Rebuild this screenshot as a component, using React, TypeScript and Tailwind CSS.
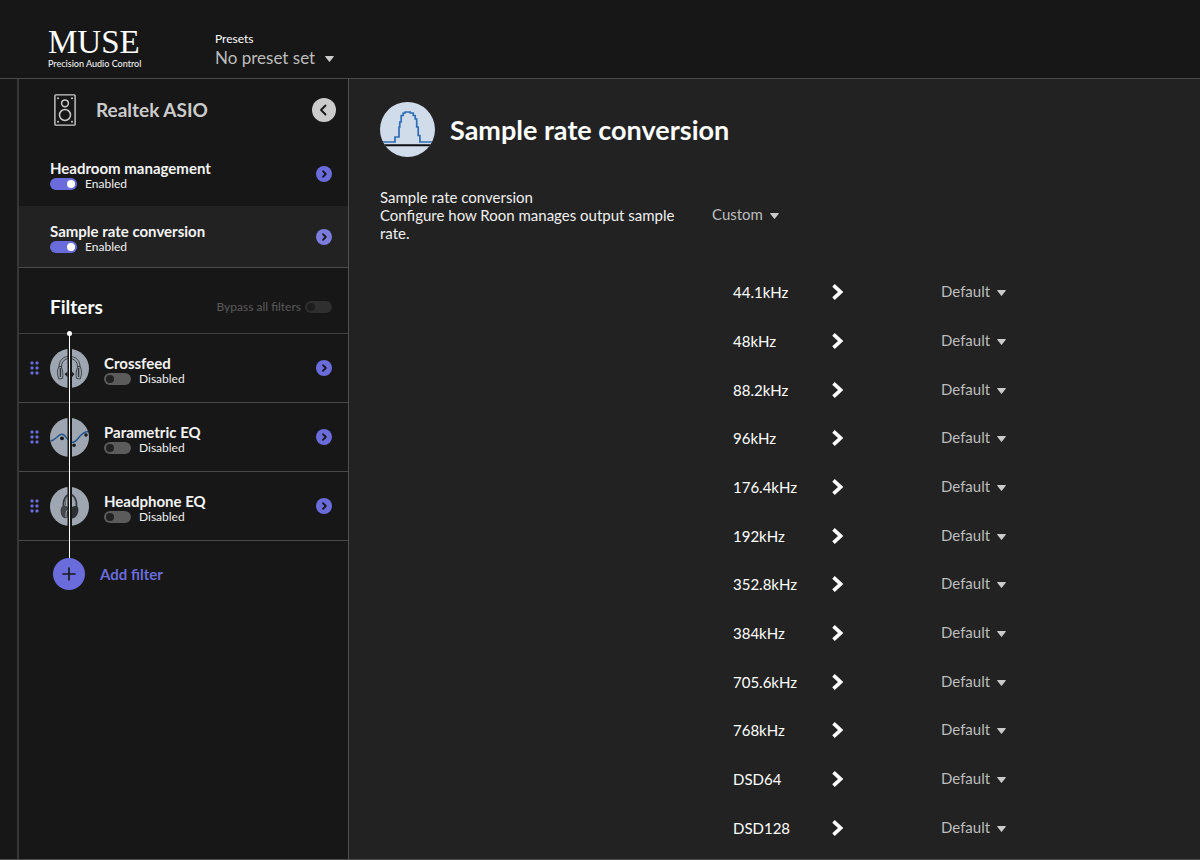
import { useState, type ReactNode } from "react";

const rates = [
  "44.1kHz",
  "48kHz",
  "88.2kHz",
  "96kHz",
  "176.4kHz",
  "192kHz",
  "352.8kHz",
  "384kHz",
  "705.6kHz",
  "768kHz",
  "DSD64",
  "DSD128",
];

function Caret({ className }: { className: string }) {
  return (
    <svg viewBox="0 0 9 6" className={className} aria-hidden="true">
      <path d="M0.6 0h7.8q0.8 0 0.3 0.7L5 5.6q-0.5 0.6-1 0L0.3 0.7Q-0.2 0 0.6 0Z" fill="#cbcbcb" />
    </svg>
  );
}

function SmallSelect({ id, label, options }: { id: string; label?: string; options: string[] }) {
  return (
    <span className="relative inline-flex items-center">
      <select
        id={id}
        aria-label={label}
        className="field-sizing-content cursor-pointer appearance-none bg-transparent pb-[2px] pr-4 text-[15px] leading-5 text-[#bdbdbd] outline-none"
      >
        {options.map((o) => (
          <option key={o} className="bg-[#222222]">
            {o}
          </option>
        ))}
      </select>
      <Caret className="pointer-events-none absolute right-0 top-[9px] h-[6px] w-[9px]" />
    </span>
  );
}

function Toggle({ id, initial, muted = false }: { id: string; initial: boolean; muted?: boolean }) {
  const [on, setOn] = useState(initial);
  const track = on ? "bg-[#6a6cdb]" : muted ? "bg-[#2f2f30]" : "bg-[#5b5b5b]";
  const knob = on
    ? "before:translate-x-[15px] before:bg-white"
    : muted
      ? "before:bg-[#1d1d1d]"
      : "before:bg-[#212121]";
  return (
    <input
      id={id}
      type="checkbox"
      role="switch"
      checked={on}
      onChange={(e) => setOn(e.target.checked)}
      className={`flex h-3 w-[27px] shrink-0 cursor-pointer appearance-none items-center rounded-full px-[2px] before:size-2 before:rounded-full before:content-[''] ${track} ${knob}`}
    />
  );
}

function OpenButton({ label, light = false }: { label: string; light?: boolean }) {
  return (
    <button
      type="button"
      aria-label={label}
      className={`flex size-4 shrink-0 items-center justify-center rounded-full ${light ? "bg-[#7b7cdc]" : "bg-[#6a6cdb]"}`}
    >
      <svg viewBox="0 0 16 16" className="size-4" fill="none" stroke="#171717" strokeWidth="1.8" strokeLinecap="round" strokeLinejoin="round" aria-hidden="true">
        <path d="M7 5.2 9.8 8 7 10.8" />
      </svg>
    </button>
  );
}

function Stage({ id, name, enabled }: { id: string; name: string; enabled: boolean }) {
  return (
    <div className="min-w-0 flex-1 pt-[2px]">
      <h3 className="text-[15px] font-bold leading-[18px] text-[#f4f4f4]">{name}</h3>
      <label htmlFor={id} className="flex items-center gap-2 text-xs leading-[14px] text-[#f0f0f0]">
        <Toggle id={id} initial={enabled} />
        {enabled ? "Enabled" : "Disabled"}
      </label>
    </div>
  );
}

function FilterIcon({ children }: { children: ReactNode }) {
  return (
    <svg viewBox="0 0 39 39" className="size-[39px] shrink-0" aria-hidden="true">
      <circle cx="19.5" cy="19.5" r="19.5" fill="#9ea7b1" />
      {children}
      <path d="M17.500 0h4.500v39h-4.500z" fill="#171717" />
    </svg>
  );
}

function CrossfeedIcon() {
  return (
    <FilterIcon>
      <g fill="none" stroke="#33383d" strokeWidth="0.9">
        <path d="M9 18.5C8 3.5 31 3.5 30 18.5" />
        <path d="M11.5 18C11 6.5 28 6.5 27.5 18" />
        <path d="M9 17.5c-2 3-2 8-.2 12.5l3.8-.6c.6-4 .2-8-1.4-12Z" />
        <path d="M30 17.5c2 3 2 8 .2 12.5l-3.8-.6c-.6-4-.2-8 1.4-12Z" />
        <path d="M10.4 19v9M28.6 19v9" strokeWidth="1.4" />
      </g>
      <path d="M14.5 25l3-2.200v5.400zM24.5 25L22 22.8v5.4z" fill="#1f2225" />
    </FilterIcon>
  );
}

function ParametricIcon() {
  return (
    <FilterIcon>
      <path d="M.6 23C6 22 8 16 12 16.300c4 .3 5.500 7.500 10 8C28 25 29 14 38.200 13.500" fill="none" stroke="#23568f" strokeWidth="1.400" />
      <circle cx="12" cy="20.300" r="1.900" fill="#171a1d" />
      <circle cx="24" cy="27.300" r="1.800" fill="#171a1d" />
      <circle cx="36" cy="17" r="1.700" fill="#171a1d" />
    </FilterIcon>
  );
}

function HeadphoneIcon() {
  return (
    <FilterIcon>
      <path d="M13.500 20C12 4 27.500 3 26.500 20" fill="none" stroke="#33363b" strokeWidth="1.700" />
      <path d="M15.500 18C15 7 21 6 22 8" fill="none" stroke="#5a6067" strokeWidth="1" />
      <path d="M12.500 19c3-1.500 6 0 6.500 5.500s-2 7.500-5 6.500c-4-1.500-4.500-10-1.500-12Z" fill="#43464b" />
      <path d="M22 20c2.500-1.500 5-1.500 6 .5 1.300 4-.5 8.500-4 10.500-1.500 1-3 .5-4 0Z" fill="#2d3034" />
      <path d="M16 30v-4q.3-3 2.500-3" fill="none" stroke="#9ea7b1" strokeWidth="1" />
    </FilterIcon>
  );
}

function DragHandle({ label }: { label: string }) {
  return (
    <button type="button" aria-label={label} className="flex w-[9px] shrink-0 cursor-grab justify-center">
      <svg viewBox="0 0 9 14" className="h-[14px] w-[9px]" fill="#6a6cdb" aria-hidden="true">
        <rect x="0.500" y="0.500" width="3" height="3" rx="1" />
        <rect x="5.500" y="0.500" width="3" height="3" rx="1" />
        <rect x="0.500" y="5.500" width="3" height="3" rx="1" />
        <rect x="5.500" y="5.500" width="3" height="3" rx="1" />
        <rect x="0.500" y="10.500" width="3" height="3" rx="1" />
        <rect x="5.500" y="10.500" width="3" height="3" rx="1" />
      </svg>
    </button>
  );
}

function SpeakerIcon() {
  return (
    <svg viewBox="0 0 22 32" className="h-8 w-[22px] shrink-0" fill="none" stroke="#cbcbcb" aria-hidden="true">
      <rect x="0.900" y="0.900" width="20.200" height="30.200" rx="0.800" strokeWidth="1.400" />
      <circle cx="11" cy="9.300" r="3.400" strokeWidth="1.500" />
      <circle cx="11" cy="21" r="5.500" strokeWidth="1.500" />
      <g fill="#cbcbcb" stroke="none">
        <circle cx="4" cy="4.200" r="1" />
        <circle cx="18" cy="4.200" r="1" />
        <circle cx="4" cy="27.800" r="1" />
        <circle cx="18" cy="27.800" r="1" />
      </g>
    </svg>
  );
}

function Sidebar() {
  const filters = [
    { id: "crossfeed", name: "Crossfeed", icon: <CrossfeedIcon /> },
    { id: "parametric", name: "Parametric EQ", icon: <ParametricIcon /> },
    { id: "headphone", name: "Headphone EQ", icon: <HeadphoneIcon /> },
  ];
  return (
    <aside className="ml-[17px] w-[332px] shrink-0 border-l-2 border-r border-l-[#373737] border-r-[#505050]">
      <div className="flex h-[63px] items-center pb-[2px] pl-[35px] pr-3">
        <SpeakerIcon />
        <h2 className="flex-1 pl-5 text-[19px] font-bold leading-6 text-[#cbcbcb]">Realtek ASIO</h2>
        <button type="button" aria-label="Collapse" className="flex size-6 items-center justify-center rounded-full bg-[#cbcbcb]">
          <svg viewBox="0 0 24 24" className="size-6" fill="none" stroke="#171717" strokeWidth="1.800" strokeLinecap="round" strokeLinejoin="round" aria-hidden="true">
            <path d="M13.500 7.500 9 12l4.500 4.500" />
          </svg>
        </button>
      </div>
      <div className="flex h-16 items-center pl-[31px] pr-4">
        <Stage id="headroom" name="Headroom management" enabled />
        <OpenButton label="Open Headroom management" />
      </div>
      <div className="flex h-[62px] items-center border-b border-[#4a4a4a] bg-[#222222] pl-[31px] pr-4">
        <Stage id="src" name="Sample rate conversion" enabled />
        <OpenButton label="Open Sample rate conversion" light />
      </div>
      <div className="flex h-[66px] items-center border-b border-[#404040] pl-[31px] pr-4 pt-[13px]">
        <h2 className="flex-1 text-[19px] font-bold leading-6 text-white">Filters</h2>
        <label htmlFor="bypass" className="flex items-center gap-1 text-xs text-[#5a5a5a]">
          Bypass all filters
          <Toggle id="bypass" initial={false} muted />
        </label>
      </div>
      <div className="relative">
        <ul>
          {filters.map((f) => (
            <li key={f.id} className="flex h-[69px] items-center border-b border-[#484848] pl-[11px] pr-4">
              <DragHandle label={`Move ${f.name}`} />
              <span className="ml-[11px] mr-[15px] flex">{f.icon}</span>
              <div className="flex flex-1 pt-[2px]">
                <Stage id={f.id} name={f.name} enabled={false} />
              </div>
              <OpenButton label={`Open ${f.name}`} />
            </li>
          ))}
        </ul>
        <div className="absolute -bottom-5 left-[50px] top-0 w-px bg-white" />
        <div className="absolute left-12 -top-[3px] size-[5px] rounded-full bg-white" />
      </div>
      <button type="button" className="relative ml-[34px] mt-[17px] flex items-center gap-[15px] text-[15px] font-bold text-[#6a6cdb]">
        <span className="flex size-8 items-center justify-center rounded-full bg-[#6a6cdb]">
          <svg viewBox="0 0 14 14" className="size-[14px]" fill="none" stroke="#171717" strokeWidth="1.600" strokeLinecap="round" aria-hidden="true">
            <path d="M7 1v12M1 7h12" />
          </svg>
        </span>
        Add filter
      </button>
    </aside>
  );
}

export default function App() {
  return (
    <div className="flex min-h-screen flex-col border-b border-[#505050] bg-[#171717] font-['Lato',sans-serif] text-white">
      <header className="flex h-[79px] shrink-0 border-b border-[#4a4a4a] pl-12">
        <div className="w-[167px] pt-7">
          <div className="font-['Liberation_Serif',serif] text-[33px] leading-[29px]">MUSE</div>
          <div className="text-[9px] font-medium leading-[13px] text-[#f0f0f0]">Precision Audio Control</div>
        </div>
        <div className="pt-8">
          <label htmlFor="preset" className="block text-[12px] leading-[14px]">
            Presets
          </label>
          <span className="relative inline-flex">
            <select id="preset" className="field-sizing-content cursor-pointer appearance-none bg-transparent pr-[19px] text-[17px] leading-5 text-[#bdbdbd] outline-none">
              <option className="bg-[#222222]">No preset set</option>
            </select>
            <Caret className="pointer-events-none absolute right-0 top-2 h-[6px] w-[9px]" />
          </span>
        </div>
      </header>
      <div className="flex flex-1">
        <Sidebar />
        <main className="flex min-w-0 flex-1 flex-col bg-[#222222] pb-[7px] pl-[31px]">
          <div className="flex items-center gap-[15px] pt-[23px]">
            <svg viewBox="0 0 55 55" className="size-[55px]" aria-hidden="true">
              <defs>
                <clipPath id="disc">
                  <circle cx="27.500" cy="27.500" r="27.500" />
                </clipPath>
              </defs>
              <g clipPath="url(#disc)">
                <path d="M0 0h55v55H0z" fill="#d0dcea" />
                <path d="M0 40h15v-5h4V25h.8v-5h1.400v-6.500h2v-2.500h2V10h5v1h3v2.500h2V17h1.500v8h1.500v8.500h1.700V40H55" fill="none" stroke="#2f6db5" strokeWidth="1.700" />
                <path d="M0 42.300h55v1.900H0z" fill="#0d0f12" />
              </g>
            </svg>
            <h1 className="text-[27px] font-bold leading-8">Sample rate conversion</h1>
          </div>
          <div className="flex items-center gap-8 pt-[31px]">
            <p className="w-[300px] text-[15px] leading-[18px] text-[#f0f0f0]">
              Sample rate conversion
              <br />
              Configure how Roon manages output sample rate.
            </p>
            <SmallSelect id="mode" label="Sample rate conversion mode" options={["Custom"]} />
          </div>
          <ul className="grid flex-1 auto-rows-fr pt-[26px]">
            {rates.map((rate) => (
              <li key={rate} className="flex min-h-12 items-center pl-[353px]">
                <label htmlFor={rate} className="w-[99px] text-[15px] leading-5">
                  {rate}
                </label>
                <svg viewBox="0 0 12 16" className="mr-[97px] h-4 w-3" fill="none" stroke="#ffffff" strokeWidth="3.700" aria-hidden="true">
                  <path d="M1.500 1.400 8.600 8l-7.100 6.600" />
                </svg>
                <SmallSelect id={rate} options={["Default"]} />
              </li>
            ))}
          </ul>
        </main>
      </div>
    </div>
  );
}
